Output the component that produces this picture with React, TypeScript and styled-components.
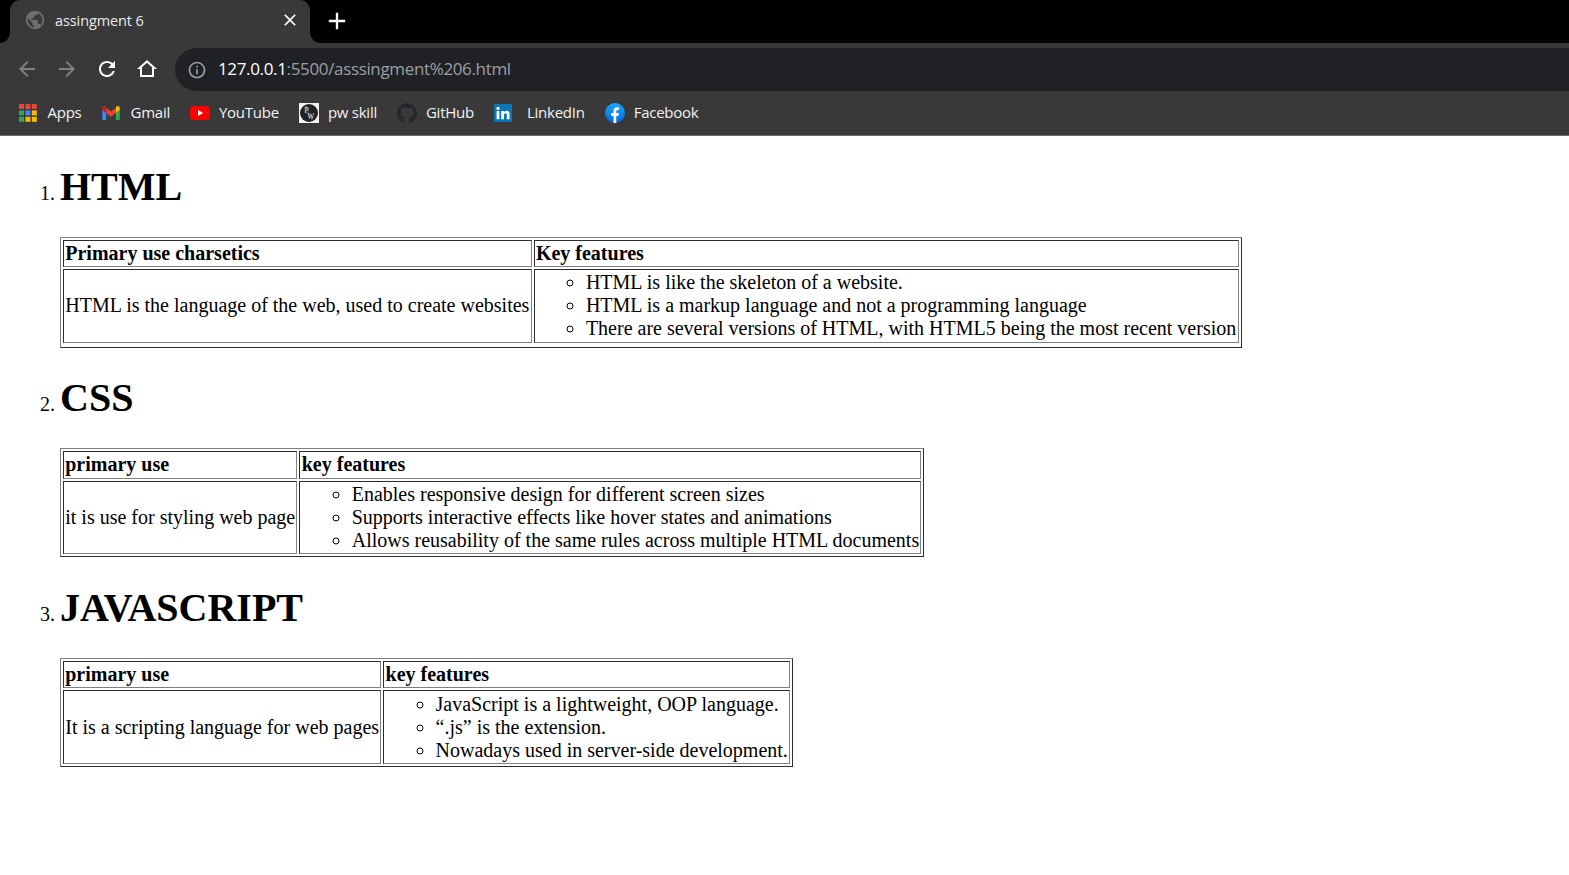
import React from "react";
import styled, { createGlobalStyle } from "styled-components";

const Global = createGlobalStyle`
  html, body { margin: 0; padding: 0; background: #fff; }
  body { overflow: hidden; }
`;
const Page = styled.div`
  width: 1569px; height: 875px; display: flex; flex-direction: column; overflow: hidden;
`;
const TabStrip = styled.div`
  height: 43px; background: #000; display: flex; align-items: flex-end; padding-left: 10px; flex: none;
`;
const Tab = styled.div`
  position: relative; width: 300px; height: 43px; background: #393939; border-radius: 10px 10px 0 0;
  display: flex; align-items: center; padding: 0 10px 3px 14px; box-sizing: border-box; color: #e8eaed;
  font: 14.5px "Open Sans", sans-serif;
  &::before, &::after { content: ""; position: absolute; bottom: 0; width: 10px; height: 10px; }
  &::before { left: -10px; background: radial-gradient(circle at 0 0, #000 9.5px, #393939 10px); }
  &::after { right: -10px; background: radial-gradient(circle at 100% 0, #000 9.5px, #393939 10px); }
`;
const TabTitle = styled.span` margin-left: 9px; flex: 1; letter-spacing: -0.1px; `;
const NewTab = styled.div` margin-left: 13px; margin-bottom: 1px; height: 42px; display: flex; align-items: center; `;
const Toolbar = styled.div`
  height: 48px; background: #393939; display: flex; align-items: flex-end; flex: none; padding-left: 15px;
`;
const NavGroup = styled.div`
  display: flex; gap: 16px; height: 43px; box-sizing: border-box; padding-bottom: 2px; align-items: center; margin-right: 16px;
`;
const Omnibox = styled.div`
  flex: 1; height: 43px; background: #202124; border-radius: 22px 0 0 22px; display: flex; align-items: center;
  padding-left: 12px; font: 17px "Open Sans", sans-serif; color: #9aa0a6;
`;
const Host = styled.span` color: #fff; `;
const Url = styled.span` margin-left: 11px; padding-bottom: 2px; letter-spacing: -0.35px; `;
const Bookmarks = styled.div`
  height: 44px; background: #393939; display: flex; align-items: center; gap: 20px; padding-left: 18.5px; flex: none;
  border-bottom: 1px solid #6e6e6e;
`;
const Bookmark = styled.div`
  display: flex; align-items: center; gap: 9px; color: #f1f3f4; font: 15px "Open Sans", sans-serif; letter-spacing: -0.25px;
`;
const IconSlot = styled.span<{ $w: number }>`
  display: flex; align-items: center; justify-content: flex-start; width: ${(p) => p.$w}px; height: 20px; flex: none;
`;
const MarkLabel = styled.span` padding-bottom: 2px; `;
const Doc = styled.ol`
  margin: 0; padding: 26.8px 0 0 60px; font: 20px "Liberation Serif", "Times New Roman", serif; color: #000; list-style: decimal;
`;
const Item = styled.li``;
const Heading = styled.h1`
  font-size: 40px; font-weight: bold; margin: 0 0 26.8px; line-height: normal;
`;
const Section = styled.div` margin-bottom: 26.8px; `;
const Table = styled.table<{ $tail: number }>`
  border: 1.25px outset #808080; border-spacing: 2.5px; border-collapse: separate;
  padding-bottom: ${(p) => p.$tail}px;
`;
const Th = styled.th`
  border: 1.25px inset #808080; padding: 1.25px; text-align: left; font-weight: bold;
`;
const Td = styled.td`
  border: 1.25px inset #808080; padding: 1.25px; vertical-align: middle;
`;
const Bullets = styled.ul`
  margin: 0; padding-left: 50px; list-style: circle;
`;

const I = ({ d, size = 24, color = "#fff" }: { d: string; size?: number; color?: string }) => (
  <svg width={size} height={size} viewBox="0 0 24 24" fill={color}><path d={d} /></svg>
);

const appsColors = [
  ["#ea4335", "#ea4335", "#ea4335"],
  ["#34a853", "#4285f4", "#fbbc04"],
  ["#34a853", "#fbbc04", "#fbbc04"],
];
const AppsIcon = () => (
  <svg width="18" height="18" viewBox="0 0 18 18">
    {appsColors.map((row, r) =>
      row.map((fill, c) => (
        <rect key={`${r}${c}`} x={c * 6.4} y={r * 6.4} width="5" height="5" fill={fill} />
      ))
    )}
  </svg>
);
const GmailIcon = () => (
  <svg width="18" height="14" viewBox="0 0 20 16">
    <path d="M1.4 16H4.5V8L0 4.6V14.6C0 15.4.6 16 1.4 16Z" fill="#4285f4" />
    <path d="M15.5 16H18.6C19.4 16 20 15.4 20 14.6V4.6L15.5 8Z" fill="#34a853" />
    <path d="M15.5 2V8L20 4.6V2.2C20 .4 18 -.6 16.6 .4Z" fill="#fbbc04" />
    <path d="M4.5 8V2L10 6.2 15.5 2V8L10 12.2Z" fill="#ea4335" />
    <path d="M0 2.2V4.6L4.5 8V2L3.4 .4C2 -.6 0 .4 0 2.2Z" fill="#c5221f" />
  </svg>
);
const YtIcon = () => (
  <svg width="20" height="14" viewBox="0 0 20 14">
    <rect width="20" height="14" rx="3.5" fill="#f00" />
    <path d="M8 4L13.2 7 8 10Z" fill="#fff" />
  </svg>
);
const PwIcon = () => (
  <svg width="20" height="20" viewBox="0 0 20 20">
    <rect width="20" height="20" fill="#f2f2f2" />
    <circle cx="10" cy="10" r="9" fill="#1f2326" />
    <path d="M7 3L13 17" stroke="#8a8d8f" strokeWidth=".6" />
    <text x="5.2" y="10" fontSize="8" fontFamily="Liberation Serif" fill="#e8e8e8">P</text>
    <text x="8.2" y="16" fontSize="7.5" fontFamily="Liberation Serif" fill="#e8e8e8">W</text>
  </svg>
);
const GithubIcon = () => (
  <I size={20} color="#23272b" d="M12 .297c-6.63 0-12 5.373-12 12 0 5.303 3.438 9.8 8.205 11.385.6.113.82-.258.82-.577 0-.285-.01-1.04-.015-2.04-3.338.724-4.042-1.61-4.042-1.61C4.422 18.07 3.633 17.7 3.633 17.7c-1.087-.744.084-.729.084-.729 1.205.084 1.838 1.236 1.838 1.236 1.07 1.835 2.809 1.305 3.495.998.108-.776.417-1.305.76-1.605-2.665-.3-5.466-1.332-5.466-5.93 0-1.31.465-2.38 1.235-3.22-.135-.303-.54-1.523.105-3.176 0 0 1.005-.322 3.3 1.23.96-.267 1.98-.399 3-.405 1.02.006 2.04.138 3 .405 2.28-1.552 3.285-1.23 3.285-1.23.645 1.653.24 2.873.12 3.176.765.84 1.23 1.91 1.23 3.22 0 4.61-2.805 5.625-5.475 5.92.42.36.81 1.096.81 2.22 0 1.606-.015 2.896-.015 3.286 0 .315.21.69.825.57C20.565 22.092 24 17.592 24 12.297c0-6.627-5.373-12-12-12" />
);
const LinkedinIcon = () => (
  <svg width="18" height="18" viewBox="0 0 18 18">
    <rect width="18" height="18" rx="1" fill="#0a76b4" />
    <rect x="2.6" y="7" width="2.8" height="8.2" fill="#fff" />
    <circle cx="4" cy="4.4" r="1.6" fill="#fff" />
    <path d="M7.2 7H10V8.2C10.5 7.4 11.4 6.8 12.6 6.8 14.9 6.8 15.6 8.3 15.6 10.4V15.2H12.8V11C12.8 10 12.6 9.2 11.6 9.2 10.5 9.2 10 10 10 11V15.2H7.2Z" fill="#fff" />
  </svg>
);
const FbIcon = () => (
  <svg width="20" height="20" viewBox="0 0 20 20">
    <defs>
      <linearGradient id="fb" x1="0" y1="0" x2="0" y2="1">
        <stop offset="0" stopColor="#18acfe" />
        <stop offset="1" stopColor="#0163e0" />
      </linearGradient>
    </defs>
    <circle cx="10" cy="10" r="10" fill="url(#fb)" />
    <path d="M8.5 20V12.9H6.2V10H8.5V8C8.5 5.6 9.9 4.3 12 4.3 13 4.3 14 4.5 14 4.5V6.9H12.8C11.6 6.9 11.3 7.6 11.3 8.3V10H13.9L13.5 12.9H11.3V20Z" fill="#fff" />
  </svg>
);

const marks: { label: string; slot: number; icon: React.ReactNode }[] = [
  { label: "Apps", slot: 20, icon: <AppsIcon /> },
  { label: "Gmail", slot: 20, icon: <GmailIcon /> },
  { label: "YouTube", slot: 20, icon: <YtIcon /> },
  { label: "pw skill", slot: 20, icon: <PwIcon /> },
  { label: "GitHub", slot: 20, icon: <GithubIcon /> },
  { label: "LinkedIn", slot: 24, icon: <LinkedinIcon /> },
  { label: "Facebook", slot: 20, icon: <FbIcon /> },
];

const sections = [
  {
    title: "HTML", h1: "Primary use charsetics", h2: "Key features", tail: 2,
    use: "HTML is the language of the web, used to create websites",
    items: ["HTML is like the skeleton of a website.", "HTML is a markup language and not a programming language", "There are several versions of HTML, with HTML5 being the most recent version"],
  },
  {
    title: "CSS", h1: "primary use", h2: "key features", tail: 0,
    use: "it is use for styling web page",
    items: ["Enables responsive design for different screen sizes", "Supports interactive effects like hover states and animations", "Allows reusability of the same rules across multiple HTML documents"],
  },
  {
    title: "JAVASCRIPT", h1: "primary use", h2: "key features", tail: 0,
    use: "It is a scripting language for web pages",
    items: ["JavaScript is a lightweight, OOP language.", "“.js” is the extension.", "Nowadays used in server-side development."],
  },
];

export default function App() {
  return (
    <Page>
      <Global />
      <TabStrip>
        <Tab>
          <I size={22} color="#6b6e72" d="M12 2C6.48 2 2 6.48 2 12s4.48 10 10 10 10-4.48 10-10S17.52 2 12 2zm-1 17.93c-3.95-.49-7-3.85-7-7.93 0-.62.08-1.21.21-1.79L9 15v1c0 1.1.9 2 2 2v1.93zm6.9-2.54c-.26-.81-1-1.39-1.9-1.39h-1v-3c0-.55-.45-1-1-1H8v-2h2c.55 0 1-.45 1-1V7h2c1.1 0 2-.9 2-2v-.41c2.93 1.19 5 4.06 5 7.41 0 2.08-.8 3.97-2.1 5.39z" />
          <TabTitle>assingment 6</TabTitle>
          <I size={20} color="#fff" d="M19 6.41L17.59 5 12 10.59 6.41 5 5 6.41 10.59 12 5 17.59 6.41 19 12 13.41 17.59 19 19 17.59 13.41 12z" />
        </Tab>
        <NewTab>
          <I size={28} d="M19 13h-6v6h-2v-6H5v-2h6V5h2v6h6v2z" />
        </NewTab>
      </TabStrip>
      <Toolbar>
        <NavGroup>
          <I color="#7d7f81" d="M20 11H7.83l5.59-5.59L12 4l-8 8 8 8 1.41-1.41L7.83 13H20v-2z" />
          <I color="#7d7f81" d="M12 4l-1.41 1.41L16.17 11H4v2h12.17l-5.58 5.59L12 20l8-8z" />
          <I d="M17.65 6.35C16.2 4.9 14.21 4 12 4c-4.42 0-7.99 3.58-7.99 8s3.57 8 7.99 8c3.73 0 6.84-2.55 7.73-6h-2.08c-.82 2.33-3.04 4-5.65 4-3.31 0-6-2.69-6-6s2.69-6 6-6c1.66 0 3.14.69 4.22 1.78L13 11h7V4l-2.35 2.35z" />
          <I d="M12 3L2 12h3v8h14v-8h3L12 3zm5 15H7v-7.81l5-4.5 5 4.5V18z" />
        </NavGroup>
        <Omnibox>
          <I size={20} color="#9aa0a6" d="M11 7h2v2h-2zm0 4h2v6h-2zm1-9C6.48 2 2 6.48 2 12s4.48 10 10 10 10-4.48 10-10S17.52 2 12 2zm0 18c-4.41 0-8-3.59-8-8s3.59-8 8-8 8 3.59 8 8-3.59 8-8 8z" />
          <Url><Host>127.0.0.1</Host>:5500/asssingment%206.html</Url>
        </Omnibox>
      </Toolbar>
      <Bookmarks>
        {marks.map((m) => (
          <Bookmark key={m.label}>
            <IconSlot $w={m.slot}>{m.icon}</IconSlot>
            <MarkLabel>{m.label}</MarkLabel>
          </Bookmark>
        ))}
      </Bookmarks>
      <Doc>
        {sections.map((s) => (
          <Item key={s.title}>
            <Heading>{s.title}</Heading>
            <Section>
              <Table $tail={s.tail}>
                <thead>
                  <tr><Th>{s.h1}</Th><Th>{s.h2}</Th></tr>
                </thead>
                <tbody>
                  <tr>
                    <Td>{s.use}</Td>
                    <Td><Bullets>{s.items.map((t) => <li key={t}>{t}</li>)}</Bullets></Td>
                  </tr>
                </tbody>
              </Table>
            </Section>
          </Item>
        ))}
      </Doc>
    </Page>
  );
}
